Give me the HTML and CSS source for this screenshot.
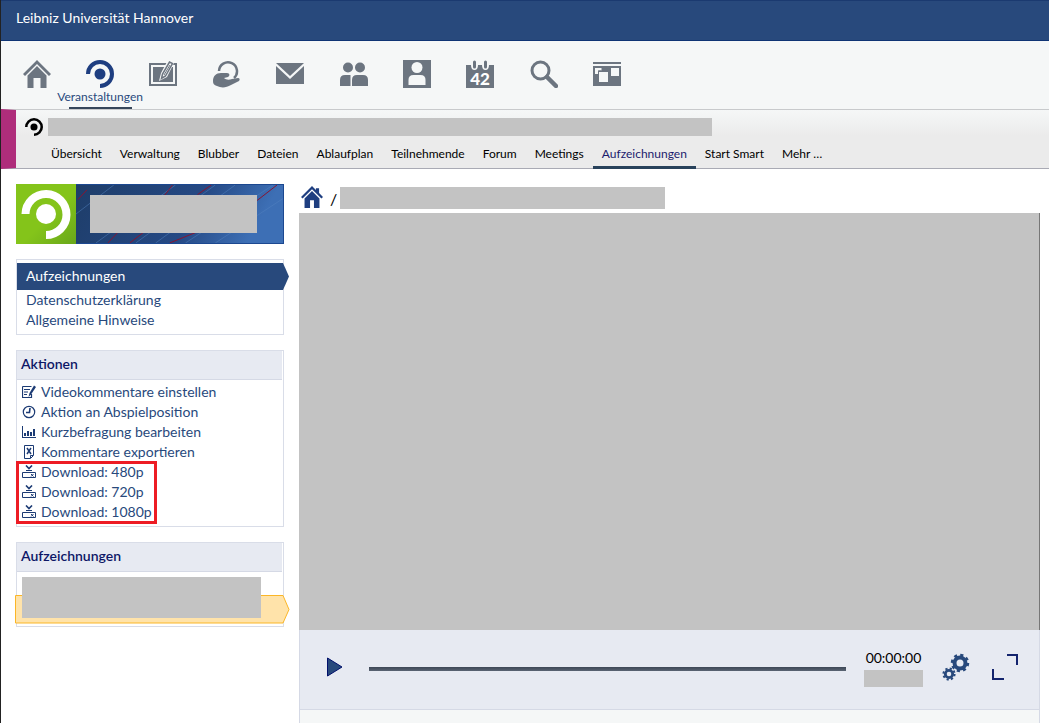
FILE: index.html
```html
<!DOCTYPE html>
<html lang="de">
<head>
<meta charset="utf-8">
<title>Aufzeichnungen</title>
<link rel="stylesheet" href="styles.css">
</head>
<body>
<svg class="defs" width="0" height="0" aria-hidden="true">
  <symbol id="home" viewBox="0 0 28 28"><path d="M14 0 0 14l2 2L14 4l12 12 2-2-5-5V3h-4v2z"/><path d="M14 6.500 4.500 16v12h7V18h5v10h7V16z"/></symbol>
  <symbol id="seminar" viewBox="0 0 28 28"><circle cx="14" cy="14" r="5.500"/><path d="M2 14a12 12 0 1 1 12 12" fill="none" stroke="currentColor" stroke-width="4"/></symbol>
  <symbol id="download" viewBox="0 0 14 14"><path d="m4 .5 3 3 3-3" fill="none" stroke="currentColor" stroke-width="1.600"/><path d="M.5 7.500h13v5H.5z" fill="none" stroke="currentColor"/><path d="M4 5.500h6" stroke="currentColor"/><path d="m9 9 2.500 2.500M11.500 9 9 11.500" stroke="currentColor"/></symbol>
</svg>
<header class="topbar">Leibniz Universität Hannover</header>
<nav class="mainnav" aria-label="Hauptnavigation">
  <a href="#" aria-label="Start"><svg viewBox="0 0 28 28"><path d="M14 0 0 14l2 2L14 4l12 12 2-2z"/><path d="M14 6 4.500 15.500V28h6V18h7v10h6V15.500z"/></svg></a>
  <a href="#" class="current"><svg><use href="#seminar"/></svg><span>Veranstaltungen</span></a>
  <a href="#" aria-label="Lernmaterialien"><svg viewBox="0 0 28 28"><path d="M1 4h26v21H1z" fill="none" stroke="currentColor" stroke-width="2"/><path d="M4 7h20v15H4z"/><path d="m10 21 2-8L19 0l6 3-7 14z" fill="#f5f7f7"/><path d="m12.500 18.500 1-4.500L20.500 2l3 1.500L16.500 16z" fill="none" stroke="currentColor" stroke-width="1.500"/><path d="m15 15 6-10" stroke="currentColor"/></svg></a>
  <a href="#" aria-label="Kurse"><svg viewBox="0 0 28 28"><path d="M6 11a9 9 0 1 1 15 7" fill="none" stroke="currentColor" stroke-width="2.500"/><path d="M0 21c0-5 3-8 8-8h6c3 0 3 3 1 4l-4 1c2 2 5 2 8 1l6-1c2 0 2 2 1 3l-8 4c-5 3-10 3-14 1-3-1-4-2-4-5z"/></svg></a>
  <a href="#" aria-label="Nachrichten"><svg viewBox="0 0 28 28"><path d="M0 3h28L14 16z"/><path d="M0 6v18h28V6L14 19z"/></svg></a>
  <a href="#" aria-label="Community"><svg viewBox="0 0 28 28"><circle cx="8" cy="7.500" r="5"/><circle cx="20" cy="7.500" r="5"/><path d="M0 26v-6q0-5 5-5h5.500v11zM12 26v-6q0-5 5-5h6q5 0 5 5v6z"/></svg></a>
  <a href="#" aria-label="Profil"><svg viewBox="0 0 28 28"><path d="M0 0h28v28H0z"/><circle cx="14" cy="7.500" r="5.500" fill="#f5f7f7"/><path d="M5.500 25v-5q0-5 5-5h7q5 0 5 5v5z" fill="#f5f7f7"/></svg></a>
  <a href="#" aria-label="Planer"><svg viewBox="0 0 28 28"><path d="M0 5h5q0 5 3.500 5T12 5h4q0 5 3.500 5T23 5h5v23H0z"/><path d="M8.500 2v5M19.500 2v5" stroke="currentColor" stroke-width="3" stroke-linecap="round"/><text x="14" y="25" class="cal">42</text></svg></a>
  <a href="#" aria-label="Suche"><svg viewBox="0 0 28 28"><circle cx="10.500" cy="10.500" r="8.500" fill="none" stroke="currentColor" stroke-width="3"/><path d="m17 17 9 9" stroke="currentColor" stroke-width="4.500" stroke-linecap="round"/></svg></a>
  <a href="#" aria-label="Tools"><svg viewBox="0 0 28 28"><path d="M0 2h28v2H0zM0 6h28v20H0z"/><path d="M2 8h6.500v6H2zM18 8h8v8h-8z" fill="#f5f7f7"/><path d="M5 10.500h9v2H5z"/><path d="M6 12h9v10H6z" fill="#f5f7f7"/><path d="M5.500 14V11h3" fill="none" stroke="currentColor"/></svg></a>
</nav>
<section class="course">
  <div class="course-title"><svg><use href="#seminar"/></svg><span class="mask"></span></div>
  <nav class="tabs" aria-label="Veranstaltung">
    <a href="#">Übersicht</a><a href="#">Verwaltung</a><a href="#">Blubber</a><a href="#">Dateien</a><a href="#">Ablaufplan</a><a href="#">Teilnehmende</a><a href="#">Forum</a><a href="#">Meetings</a><a href="#" class="current">Aufzeichnungen</a><a href="#">Start Smart</a><a href="#">Mehr …</a>
  </nav>
</section>
<div class="layout">
  <aside class="sidebar">
    <div class="banner">
      <svg class="banner-logo" viewBox="0 0 60 60"><circle cx="30" cy="30" r="10"/><path d="M9.500 30a20.500 20.500 0 1 1 20.500 21" fill="none" stroke="currentColor" stroke-width="8"/></svg>
      <div class="banner-art">
        <svg viewBox="0 0 208 60" preserveAspectRatio="none"><g class="shade"><path d="m0 30 38-30M20 60 100 0M60 60l80-60M80 60l80-60M110 60l88-60M140 60l68-46"/></g><g class="streak"><path d="m2 15 9-10M88 12l9-12M122 10l14-10M182 16 202 0M32 60l11-12M54 60l15-12M94 60l29-12"/></g></svg>
        <span class="mask"></span>
      </div>
    </div>
    <nav class="views box" aria-label="Ansichten">
      <a href="#" class="current">Aufzeichnungen</a>
      <a href="#">Datenschutzerklärung</a>
      <a href="#">Allgemeine Hinweise</a>
    </nav>
    <section class="box">
      <h2>Aktionen</h2>
      <div class="actions">
        <a href="#"><svg viewBox="0 0 14 14"><path d="M.5 1.500h9M.5 1.500v11h9V9M2 4.500h6M2 7h4M2 9.500h3" fill="none" stroke="currentColor" stroke-width="1.200"/><path d="m6.500 12 1-4L12 .5l2 1.500-5 7.500z"/></svg>Videokommentare einstellen</a>
        <a href="#"><svg viewBox="0 0 14 14"><g fill="none" stroke="currentColor"><circle cx="7" cy="7" r="5.700" stroke-width="1.200"/><path d="M8 3 7.500 7.500H4" stroke-width="1.600"/></g></svg>Aktion an Abspielposition</a>
        <a href="#"><svg viewBox="0 0 14 14"><path d="M0 1h1v11h13v1H0zM2 8h2v3H2zM5 6h2v5H5zM8 7h2v4H8zM11 4h2v7h-2z"/></svg>Kurzbefragung bearbeiten</a>
        <a href="#"><svg viewBox="0 0 14 14"><path d="M2.500.5h9v10l-3 3h-6zM8.500 13v-2.500H11" fill="none" stroke="currentColor"/><path d="m5 3 4 6M9 3 5 9" stroke="currentColor" stroke-width="1.500"/></svg>Kommentare exportieren</a>
        <div class="downloads">
          <a href="#"><svg><use href="#download"/></svg>Download: 480p</a>
          <a href="#"><svg><use href="#download"/></svg>Download: 720p</a>
          <a href="#"><svg><use href="#download"/></svg>Download: 1080p</a>
        </div>
      </div>
    </section>
    <section class="box">
      <h2>Aufzeichnungen</h2>
      <div class="recordings">
        <svg class="marker" viewBox="0 0 275 29"><path d="M.5.500H268L274 14.500 268 28H.5z"/></svg>
        <span class="mask"></span>
      </div>
    </section>
  </aside>
  <main>
    <div class="crumbs"><a href="#" aria-label="Start"><svg><use href="#home"/></svg></a><span>/</span><span class="mask"></span></div>
    <div class="video"></div>
    <div class="player">
      <button type="button" class="play" aria-label="Abspielen"><svg viewBox="0 0 16 20"><path d="M.5 1v18L15 10z"/></svg></button>
      <input type="range" min="0" max="100" value="0" aria-label="Position">
      <div class="time"><time>00:00:00</time><span class="mask"></span></div>
      <button type="button" class="gears" aria-label="Einstellungen"><svg viewBox="0 0 28 28"><g fill="none" stroke="currentColor"><circle cx="18" cy="10" r="5.500" stroke-width="4"/><circle cx="18" cy="10" r="8" stroke-width="2.500" stroke-dasharray="3.140 3.140"/><circle cx="7" cy="21" r="3.700" stroke-width="2.800"/><circle cx="7" cy="21" r="5.600" stroke-width="2" stroke-dasharray="2.200 2.200"/></g></svg></button>
      <button type="button" class="full" aria-label="Vollbild"><svg viewBox="0 0 28 28"><path d="M16 2h10v10M2 16v10h11" fill="none" stroke="currentColor" stroke-width="2"/></svg></button>
    </div>
    <div class="below"></div>
  </main>
</div>
</body>
</html>
```
FILE: styles.css
```css
*, *::before, *::after { box-sizing: border-box; }
body {
  display: flex;
  flex-direction: column;
  min-height: 100vh;
  margin: 0;
  border-left: 1px solid #222;
  background: #fff;
  color: #000;
  font: 14px/20px Lato, sans-serif;
}
a { color: inherit; text-decoration: none; }
svg { display: block; fill: currentColor; }
button { padding: 0; border: 0; background: none; color: #28497c; }
.defs { position: absolute; }
.mask { display: block; background: #c3c3c3; }

.topbar {
  height: 41px;
  padding: 7px 15px;
  border-top: 1px solid #1b3a70;
  border-bottom: 1px solid #0f3474;
  background: #28497c;
  color: #fff;
}
.mainnav {
  display: grid;
  grid-template-columns: repeat(10, minmax(0, 1fr));
  width: 100%;
  max-width: 638px;
  height: 68px;
  padding: 19px 0 0 4px;
}
body { background: linear-gradient(#f5f7f7 0 109px, #fff 109px) no-repeat; }
.mainnav a {
  display: flex;
  flex-direction: column;
  align-items: center;
  color: #6c7580;
  font-size: 12px;
  line-height: 18px;
}
.mainnav svg { width: 28px; height: 28px; }
.mainnav .current {
  color: #28497c;
  background: linear-gradient(#36465a, #36465a) center bottom / 63px 2px no-repeat;
}
.mainnav .current svg { color: #1e3e80; }
.cal {
  fill: #fff;
  font: 900 17px Lato, sans-serif;
  text-anchor: middle;
}

.course {
  height: 60px;
  border-top: 1px solid #c8cacc;
  border-bottom: 1px solid #a9aab4;
  border-left: 15px solid #af2d7b;
  background: linear-gradient(#f5f7f7, #ebebeb 26px);
}
.course-title {
  display: flex;
  gap: 5px;
  height: 34px;
  padding: 8px 9px;
}
.course-title svg { width: 18px; height: 18px; }
.course-title .mask { flex: 0 1 664px; height: 18px; }
.tabs {
  display: flex;
  height: 25px;
  padding-left: 26px;
  font-size: 12px;
  line-height: 20px;
}
.tabs a { padding: 0 9px; white-space: nowrap; }
.tabs .current { border-bottom: 3px solid #28425b; color: #1b1b6d; }

.layout {
  display: grid;
  grid-template-columns: 268px minmax(0, 1fr);
  gap: 15px;
  flex: 1;
  padding: 15px 9px 0 15px;
}
.sidebar {
  display: flex;
  flex-direction: column;
  gap: 15px;
  color: #28497c;
}
.banner { display: flex; height: 60px; }
.banner-logo { width: 60px; height: 60px; background: linear-gradient(135deg, #84c41a 55%, #69a71b); color: #fff; }
.banner-art {
  flex: 1;
  display: grid;
  padding: 10px 26px 11px 14px;
  border: 1px solid #1c4890;
  border-left: 0;
  background: linear-gradient(120deg, #1e3d69, #254984 55%, #3d6fb5 85%);
  position: relative;
}
.banner-art svg { position: absolute; inset: 0; width: 100%; height: 100%; fill: none; }
.banner-art .mask { position: relative; height: 38px; }
.shade { stroke: #5482c0; opacity: .5; }
.streak { stroke: #8a1430; }

.box { border: 1px solid #d9dde8; }
.views { display: flex; flex-direction: column; padding: 3px 0 4px; }
.views a { padding: 0 9px; }
.views .current {
  position: relative;
  padding: 3px 9px 4px;
  background: #28497c;
  color: #fff;
}
.views .current::after {
  content: "";
  position: absolute;
  top: 0;
  right: -6px;
  width: 6px;
  height: 100%;
  background: #28497c;
  clip-path: polygon(0 0, 100% 50%, 0 100%);
}
h2 {
  margin: 0 1px 0 0;
  padding: 3px 4px 5px;
  border-bottom: 1px solid #d5d9e5;
  background: #e7eaf2;
  color: #0d1766;
  font-size: 14px;
  font-weight: 600;
  line-height: 20px;
}
.actions { padding: 2px 5px 4px; }
.actions a { display: flex; align-items: center; gap: 5px; }
.actions svg { width: 14px; height: 14px; color: #1c3b74; }
.downloads { position: relative; }
.downloads::after {
  content: "";
  position: absolute;
  inset: -1px auto -2px -6px;
  width: 141px;
  border: 3px solid #ed1c24;
}
.recordings { position: relative; padding: 5px 22px 8px 5px; }
.recordings .mask { position: relative; height: 41px; }
.marker {
  position: absolute;
  top: 23px;
  left: -2px;
  width: 275px;
  height: 29px;
  fill: #ffe3aa;
  stroke: #fbb627;
}

main { display: flex; flex-direction: column; min-width: 0; }
.crumbs { display: flex; height: 29px; gap: 3px; padding-left: 2px; font-size: 16px; line-height: 30px; }
.crumbs svg { width: 22px; height: 22px; color: #1e3e80; margin: 2px 4px 0 0; }
.crumbs .mask { flex: 0 1 325px; height: 22px; margin-top: 3px; }
.video { height: 417px; border-right: 1px solid #777; background: #c3c3c3; }
.player {
  display: flex;
  align-items: center;
  height: 80px;
  padding: 0 20px 6px 27px;
  border: 1px solid #d5d9e5;
  border-top: 0;
  background: #e7eaf2;
}
.play { width: 16px; height: 20px; }
.play svg { stroke: #00106b; }
input[type="range"] {
  flex: 1;
  min-width: 0;
  height: 20px;
  margin: 4px 18px 0 26px;
  appearance: none;
  background: linear-gradient(#3d4756, #5a6473) center / 100% 4px no-repeat;
}
input[type="range"]::-webkit-slider-thumb { appearance: none; width: 0; height: 0; }
.time { width: 59px; padding-top: 2px; text-align: center; }
.time time { display: block; }
.time .mask { height: 17px; margin-top: 2px; }
.gears { width: 28px; margin-left: 19px; }
.full { width: 28px; margin-left: 21px; color: #14246e; }
.below { flex: 1; border: 1px solid #d5d9e5; border-width: 0 1px; background: #f5f7f7; }
```
